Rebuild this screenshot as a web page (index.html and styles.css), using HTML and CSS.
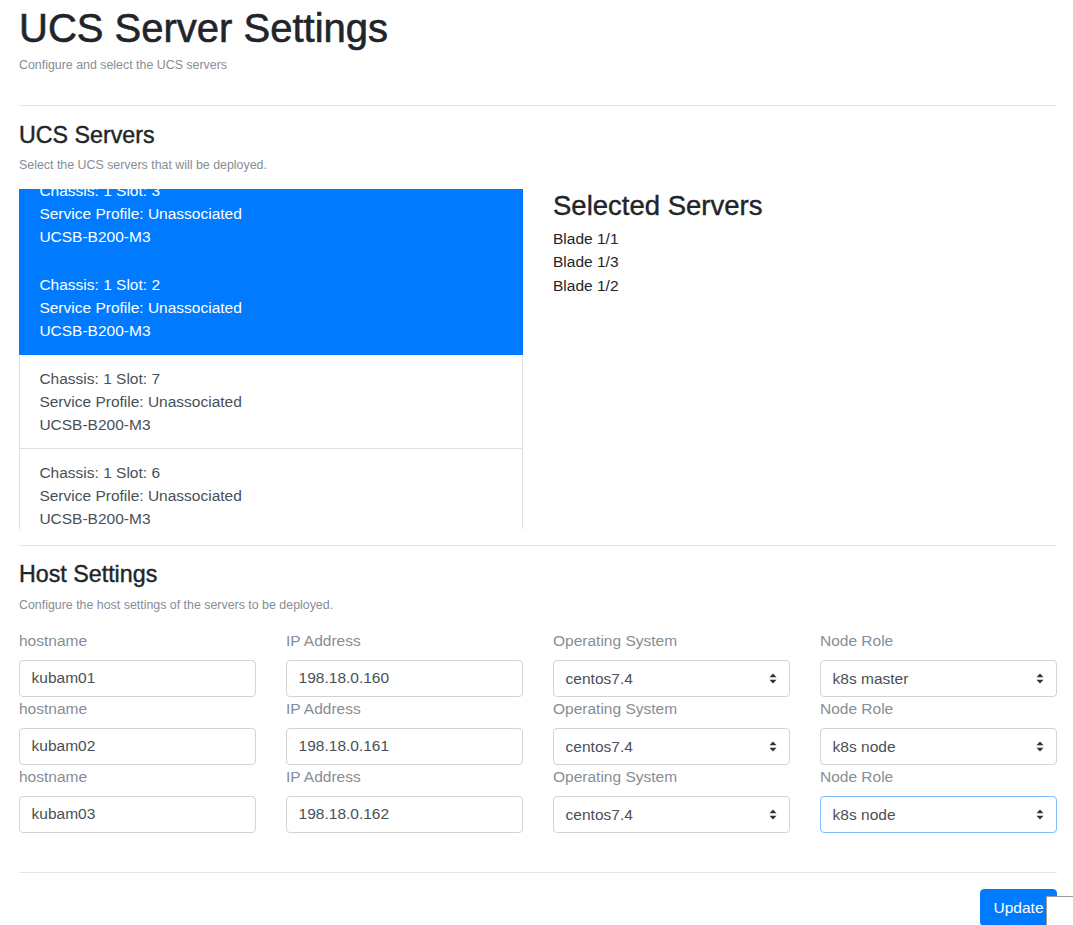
FILE: index.html
```html
<!DOCTYPE html>
<html lang="en">
<head>
<meta charset="utf-8">
<title>UCS Server Settings</title>
<link rel="stylesheet" href="styles.css">
</head>
<body>
<div class="container">
  <h1 class="page-title">UCS Server Settings</h1>
  <p class="lead-muted"><small>Configure and select the UCS servers</small></p>
  <hr class="divider top-divider">

  <h4 class="section-title">UCS Servers</h4>
  <p class="lead-muted section-sub"><small>Select the UCS servers that will be deployed.</small></p>

  <div class="two-col">
    <div class="server-list" id="serverList">
      <div class="server-item active">Chassis: 1 Slot: 1<br>Service Profile: Unassociated<br>UCSB-B200-M3</div>
      <div class="server-item active">Chassis: 1 Slot: 3<br>Service Profile: Unassociated<br>UCSB-B200-M3</div>
      <div class="server-item active">Chassis: 1 Slot: 2<br>Service Profile: Unassociated<br>UCSB-B200-M3</div>
      <div class="server-item">Chassis: 1 Slot: 7<br>Service Profile: Unassociated<br>UCSB-B200-M3</div>
      <div class="server-item">Chassis: 1 Slot: 6<br>Service Profile: Unassociated<br>UCSB-B200-M3</div>
      <div class="server-item">Chassis: 1 Slot: 5<br>Service Profile: Unassociated<br>UCSB-B200-M3</div>
      <div class="server-item">Chassis: 1 Slot: 4<br>Service Profile: Unassociated<br>UCSB-B200-M3</div>
      <div class="server-item">Chassis: 1 Slot: 8<br>Service Profile: Unassociated<br>UCSB-B200-M3</div>
    </div>
    <div class="selected">
      <h3 class="selected-title">Selected Servers</h3>
      <ul class="selected-list">
        <li>Blade 1/1</li>
        <li>Blade 1/3</li>
        <li>Blade 1/2</li>
      </ul>
    </div>
  </div>

  <hr class="divider">

  <h4 class="section-title">Host Settings</h4>
  <p class="lead-muted section-sub"><small>Configure the host settings of the servers to be deployed.</small></p>

  <div class="host-grid">
    <div class="field"><label>hostname</label><input class="control" type="text" value="kubam01"></div>
    <div class="field"><label>IP Address</label><input class="control" type="text" value="198.18.0.160"></div>
    <div class="field"><label>Operating System</label><select class="control select"><option>centos7.4</option></select></div>
    <div class="field"><label>Node Role</label><select class="control select"><option>k8s master</option><option>k8s node</option></select></div>

    <div class="field"><label>hostname</label><input class="control" type="text" value="kubam02"></div>
    <div class="field"><label>IP Address</label><input class="control" type="text" value="198.18.0.161"></div>
    <div class="field"><label>Operating System</label><select class="control select"><option>centos7.4</option></select></div>
    <div class="field"><label>Node Role</label><select class="control select"><option>k8s node</option><option>k8s master</option></select></div>

    <div class="field"><label>hostname</label><input class="control" type="text" value="kubam03"></div>
    <div class="field"><label>IP Address</label><input class="control" type="text" value="198.18.0.162"></div>
    <div class="field"><label>Operating System</label><select class="control select"><option>centos7.4</option></select></div>
    <div class="field"><label>Node Role</label><select class="control select focused"><option>k8s node</option><option>k8s master</option></select></div>
  </div>

  <hr class="divider bottom-divider">

  <div class="actions">
    <div class="btn-wrap">
      <button class="btn-primary" type="button">Update</button>
      <div class="popover-edge"></div>
    </div>
  </div>
</div>
<script src="script.js"></script>
</body>
</html>
```

FILE: styles.css
```css
html, body {
  margin: 0;
  padding: 0;
  background: #fff;
}
body {
  font-family: "Liberation Sans", Arial, Helvetica, sans-serif;
  font-size: 15.5px;
  line-height: 1.5;
  color: #212529;
  overflow: hidden;
}
.container {
  width: 1038px;
  padding: 4px 0 0 19px;
}
.page-title {
  font-size: 40px;
  line-height: 48px;
  font-weight: 500;
  margin: 0;
  color: #212529;
  -webkit-text-stroke: 0.6px #212529;
}
.lead-muted {
  margin: 0;
  color: #868e96;
}
.lead-muted small {
  font-size: 12.4px;
}
.section-sub {
  padding-top: 2.5px;
  margin-bottom: 14px;
}
.divider {
  border: 0;
  border-top: 1px solid rgba(0,0,0,.1);
  margin: 15.5px 0;
  height: 0;
}
.top-divider {
  margin-top: 29.75px;
}
.section-title {
  font-size: 23.25px;
  line-height: 1.2;
  font-weight: 500;
  margin: 0;
  color: #212529;
  -webkit-text-stroke: 0.4px #212529;
}
.two-col {
  display: grid;
  grid-template-columns: 504px 504px;
  column-gap: 30px;
  align-items: start;
}
.server-list {
  height: 340px;
  overflow-y: auto;
  scrollbar-width: none;
  position: relative;
}
.server-list::-webkit-scrollbar {
  width: 0;
  height: 0;
}
.server-item {
  position: relative;
  padding: 11.625px 19.4px;
  border: 1px solid rgba(0,0,0,.125);
  margin-bottom: -1px;
  color: #495057;
  background: #fff;
  line-height: 23.25px;
}
.server-item.active {
  background: #007bff;
  border-color: #007bff;
  color: #fff;
  z-index: 2;
}
.selected-title {
  font-size: 27.5px;
  line-height: 1.2;
  font-weight: 500;
  margin: 0;
  color: #212529;
  -webkit-text-stroke: 0.4px #212529;
}
.selected-list {
  list-style: none;
  margin: 5px 0 0;
  padding: 0;
  line-height: 23.25px;
  color: #212529;
}
.host-grid {
  display: grid;
  grid-template-columns: repeat(4, 237px);
  column-gap: 30px;
}
.field {
  display: flex;
  flex-direction: column;
}
.field label {
  color: #868e96;
  line-height: 23.25px;
  margin-bottom: 7.75px;
}
.control {
  box-sizing: border-box;
  display: block;
  width: 100%;
  height: 37px;
  padding: 5.8px 11.6px;
  font-family: inherit;
  font-size: 15.5px;
  line-height: 1.5;
  color: #495057;
  background-color: #fff;
  border: 1px solid #ced4da;
  border-radius: 4px;
  margin: 0;
  outline: none;
}
.select {
  -webkit-appearance: none;
  appearance: none;
  background-image: url("data:image/svg+xml,%3Csvg xmlns='http://www.w3.org/2000/svg' width='8' height='11' viewBox='0 0 8 11'%3E%3Cpath d='M4 0.5 L7.5 4.3 H0.5 Z M4 10.5 L7.5 6.7 H0.5 Z' fill='%23333'/%3E%3C/svg%3E");
  background-repeat: no-repeat;
  background-position: right 12px center;
  background-size: 8px 11px;
  padding-right: 30px;
}
.select.focused {
  border-color: #80bdff;
}
.bottom-divider {
  margin-top: 39.5px;
}
.actions {
  display: flex;
  justify-content: flex-end;
}
.btn-wrap {
  position: relative;
}
.btn-primary {
  display: block;
  font-family: inherit;
  font-size: 15.5px;
  line-height: 1.5;
  color: #fff;
  background: #007bff;
  border: 1px solid #007bff;
  border-radius: 4px;
  padding: 5.8px 12.5px;
  height: 37px;
}
.popover-edge {
  position: absolute;
  left: 66px;
  top: 7px;
  width: 60px;
  height: 60px;
  background: #fff;
  border-top: 1px solid #9a9a9a;
  border-left: 1px solid #9a9a9a;
}
```

FILE: script.js
```js
document.getElementById('serverList').scrollTop = 117;
```
